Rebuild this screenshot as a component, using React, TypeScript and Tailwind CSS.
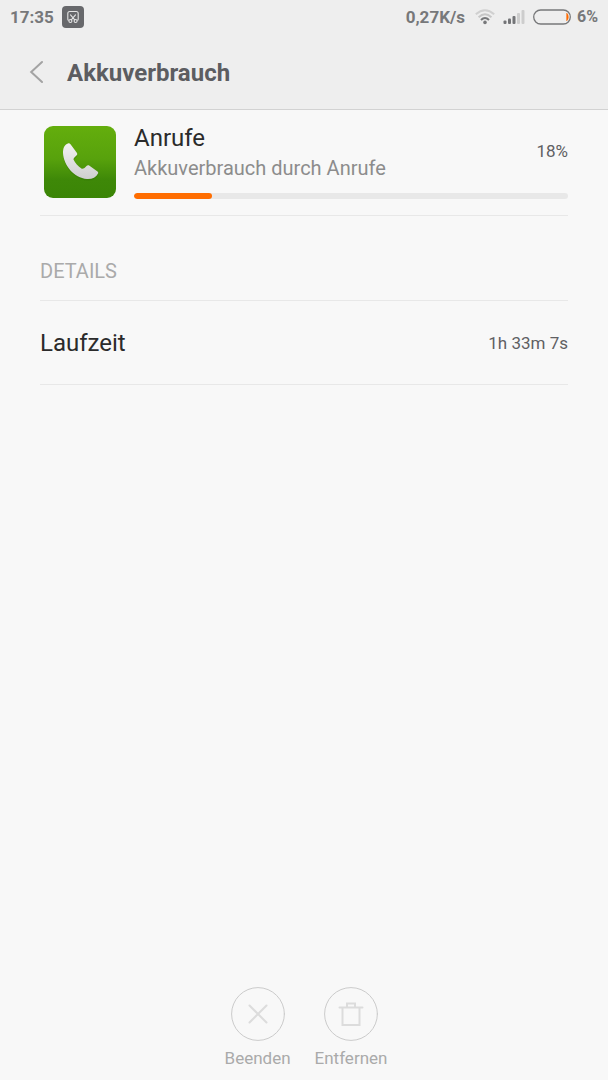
import type { ReactNode } from "react";

function ScreenshotBadge() {
  return (
    <svg className="size-[22px]" viewBox="0 0 22 22" fill="none" aria-hidden="true">
      <rect x="0" y="0" width="22" height="22" rx="4" fill="#67686b" />
      <g stroke="#e4e4e4" strokeWidth="1.1" strokeLinecap="round">
        <path d="M6.3 14.2Q5.8 13.8 5.8 13V7.5a2 2 0 0 1 2-2h6.4a2 2 0 0 1 2 2V13Q16.2 13.8 15.7 14.2" />
        <path d="M8.5 8.8l4.2 5M13.5 8.8l-4.2 5" />
        <circle cx="8.4" cy="15" r="1.5" />
        <circle cx="13.6" cy="15" r="1.5" />
      </g>
    </svg>
  );
}

function WifiIcon() {
  return (
    <svg className="h-4 w-5" viewBox="0 0 20 16" fill="none" strokeWidth="2" aria-hidden="true">
      <path d="M0.8 5.2Q10 -2.8 19.2 5.2" stroke="#d0d0d0" />
      <path d="M3.6 8.2Q10 2.4 16.4 8.2" stroke="#c6c6c6" />
      <path d="M6 11Q10 7 14 11" stroke="#77787a" />
      <circle cx="10" cy="13.4" r="1.8" fill="#77787a" />
    </svg>
  );
}

function SignalIcon() {
  return (
    <svg className="h-4 w-[22px]" viewBox="0 0 22 16" aria-hidden="true">
      <rect x="0.5" y="11.5" width="3" height="3.5" rx="1" fill="#737477" />
      <rect x="5" y="9.5" width="3" height="5.5" rx="1" fill="#737477" />
      <rect x="9.5" y="7" width="3" height="8" rx="1" fill="#737477" />
      <rect x="14" y="4" width="3" height="11" rx="1" fill="#cdcdcd" />
      <rect x="18.5" y="1" width="3" height="14" rx="1" fill="#cdcdcd" />
    </svg>
  );
}

function BatteryIcon() {
  return (
    <svg className="h-4 w-[38px]" viewBox="0 0 38 16" fill="none" aria-hidden="true">
      <rect x="0.7" y="1" width="36.6" height="14" rx="7" stroke="#77787a" strokeWidth="1.3" />
      <path d="M33.4 4h.6q1.6 1.6 1.6 4t-1.6 4h-.6z" fill="#ff6a00" />
    </svg>
  );
}

function PhoneAppIcon() {
  return (
    <svg className="size-[72px] shrink-0" viewBox="0 0 72 72" aria-hidden="true">
      <defs>
        <linearGradient id="tile" x1="0" y1="0" x2="0" y2="1">
          <stop offset="0" stopColor="#64ae0d" />
          <stop offset="0.45" stopColor="#58a20c" />
          <stop offset="0.75" stopColor="#3e8808" />
          <stop offset="1" stopColor="#3b8506" />
        </linearGradient>
        <linearGradient id="handset" x1="0" y1="0" x2="0" y2="1">
          <stop offset="0" stopColor="#f2f2f2" />
          <stop offset="1" stopColor="#cfcfcf" />
        </linearGradient>
      </defs>
      <rect width="72" height="72" rx="9" fill="url(#tile)" />
      <path
        d="M24 17.5C20.5 18.5 19 22 19 27C19.5 39 30 52 43 53C48 53.3 52 51.5 54 47.5C54.4 46.5 54.2 46 53.5 45.4L45.5 39.8C44.5 39.1 43.3 39.2 42.5 40C41.2 41.5 39.5 43 37.8 42.7C34 40.5 31 37 29.5 33.5C29.5 31.8 31.5 30.5 32.7 29.3C33.4 28.5 33.4 27.6 32.8 26.7L26.5 18.3C25.8 17.4 25 17.2 24 17.5Z"
        fill="#2d7005"
        opacity="0.35"
        transform="translate(0 1.5)"
      />
      <path
        d="M24 17.5C20.5 18.5 19 22 19 27C19.5 39 30 52 43 53C48 53.3 52 51.5 54 47.5C54.4 46.5 54.2 46 53.5 45.4L45.5 39.8C44.5 39.1 43.3 39.2 42.5 40C41.2 41.5 39.5 43 37.8 42.7C34 40.5 31 37 29.5 33.5C29.5 31.8 31.5 30.5 32.7 29.3C33.4 28.5 33.4 27.6 32.8 26.7L26.5 18.3C25.8 17.4 25 17.2 24 17.5Z"
        fill="url(#handset)"
      />
    </svg>
  );
}

function ActionButton({ label, children }: { label: string; children: ReactNode }) {
  return (
    <button type="button" disabled className="flex flex-col items-center gap-[5px] text-[17px] leading-6 text-[#aaaaaa]">
      <svg
        className="size-[54px]"
        viewBox="0 0 54 54"
        fill="none"
        stroke="#dcdcdc"
        strokeWidth="2"
        strokeLinecap="round"
        aria-hidden="true"
      >
        <circle cx="27" cy="27" r="26.4" stroke="#cbcbcb" strokeWidth="1" />
        {children}
      </svg>
      {label}
    </button>
  );
}

export default function App() {
  return (
    <div className="flex min-h-screen flex-col bg-[#f8f8f8] font-['Roboto','Noto_Sans',sans-serif]">
      <header className="border-b border-[#d2d2d2] bg-[#eeeeee]">
        <div className="flex h-[34px] items-center justify-between px-2.5 text-[17px] leading-[26px] font-bold text-[#77787a]">
          <div className="flex items-center gap-2">
            <span>17:35</span>
            <ScreenshotBadge />
          </div>
          <div className="flex items-center gap-1.5">
            <span className="pr-1">0,27K/s</span>
            <div className="flex items-center gap-2">
              <WifiIcon />
              <SignalIcon />
              <BatteryIcon />
            </div>
            <span className="text-base leading-[26px]">6%</span>
          </div>
        </div>
        <div className="flex h-[75px] items-center gap-6 pl-[29px]">
          <button type="button" aria-label="Zurück">
            <svg className="h-6 w-[14px]" viewBox="0 0 14 24" fill="none" stroke="#a3a3a3" strokeWidth="2" aria-hidden="true">
              <path d="M13 2L2.2 12L13 22" strokeLinecap="round" />
            </svg>
          </button>
          <h1 className="pt-0.5 text-2xl font-bold text-[#5c5d61]">Akkuverbrauch</h1>
        </div>
      </header>

      <main className="flex-1 px-10">
        <section className="flex gap-[18px] border-b border-[#e8e8e8] py-4 pl-1">
          <PhoneAppIcon />
          <div className="flex-1">
            <div className="flex items-start justify-between">
              <div>
                <h2 className="text-2xl leading-6 text-[#2b2b2b]">Anrufe</h2>
                <p className="mt-1 text-xl leading-7 text-[#8c8c8c]">Akkuverbrauch durch Anrufe</p>
              </div>
              <span className="pt-[11px] text-[17px] leading-7 text-[#5f6063]">18%</span>
            </div>
            <div
              role="progressbar"
              aria-label="Akkuverbrauch"
              aria-valuenow={18}
              className="mt-[11px] h-1.5 overflow-hidden rounded-full bg-[#e8e8e8]"
            >
              <div className="h-full w-[18%] rounded-full bg-[#ff6d00]" />
            </div>
          </div>
        </section>

        <h3 className="border-b border-[#e8e8e8] pt-[41px] pb-[15px] text-xl leading-7 text-[#aaaaaa]">DETAILS</h3>
        <dl className="flex h-[84px] items-center justify-between border-b border-[#e8e8e8]">
          <dt className="text-2xl text-[#2b2b2b]">Laufzeit</dt>
          <dd className="text-[17px] leading-7 text-[#5f6063]">1h 33m 7s</dd>
        </dl>
      </main>

      <footer className="flex justify-center gap-6 pb-2.5 pl-1">
        <ActionButton label="Beenden">
          <path d="M18.5 18.5L35.5 35.5M35.5 18.5L18.5 35.5" />
        </ActionButton>
        <ActionButton label="Entfernen">
          <path d="M15.5 20.5H38.5M18.5 20.5V38H35.5V20.5M23 20V16.5H31V20" />
        </ActionButton>
      </footer>
    </div>
  );
}
